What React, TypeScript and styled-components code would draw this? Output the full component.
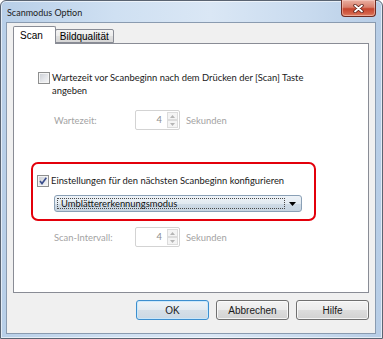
import React, { FC } from 'react';
import styled, { createGlobalStyle } from 'styled-components';

const GlobalStyle = createGlobalStyle`
  html, body {
    margin: 0;
    padding: 0;
    background: #ffffff;
  }
  body {
    width: 383px;
    height: 339px;
    overflow: hidden;
  }
`;

const uiFont = `Lato, 'Noto Sans', sans-serif`;
const classicFont = `'Liberation Sans', Arial, sans-serif`;

const Window = styled.div`
  box-sizing: border-box;
  width: 383px;
  height: 339px;
  display: flex;
  flex-direction: column;
  padding: 0 6px 4px 5px;
  border: 1px solid #5a6472;
  border-radius: 6px 6px 0 0;
  background: linear-gradient(
    to right,
    #b8cfe8 0%,
    #cfe0f2 30%,
    #dae7f5 55%,
    #c9dbef 80%,
    #b7cde6 100%
  );
  box-shadow: inset 0 0 0 1px rgba(255, 255, 255, 0.6);
`;

const TitleBar = styled.div`
  height: 21px;
  display: flex;
  align-items: flex-start;
`;

const Title = styled.span`
  font-family: ${uiFont};
  font-size: 9px;
  color: #1c1c1c;
  padding: 6px 0 0 1px;
`;

const CloseButton = styled.div`
  box-sizing: border-box;
  margin: -1px 0 0 auto;
  width: 35px;
  height: 17px;
  display: flex;
  align-items: center;
  justify-content: center;
  border: 1px solid #6e2b22;
  border-top: none;
  border-radius: 0 0 4px 4px;
  background: linear-gradient(
    #eab0a2 0%,
    #d9806d 45%,
    #c6452e 55%,
    #d4634a 85%,
    #e0866a 100%
  );
  box-shadow: inset 0 0 0 1px rgba(255, 220, 210, 0.45);
`;

const Client = styled.div`
  flex: 1;
  box-sizing: border-box;
  display: flex;
  flex-direction: column;
  padding: 3px 6px 0 6px;
  border: 1px solid #8a9bb0;
  background: #f0f0f0;
`;

const TabStrip = styled.div`
  display: flex;
  align-items: flex-end;
  height: 17px;
`;

const Tab = styled.div<{ $active?: boolean }>`
  box-sizing: border-box;
  position: relative;
  z-index: ${(p) => (p.$active ? 2 : 1)};
  height: ${(p) => (p.$active ? '18px' : '14px')};
  margin-bottom: ${(p) => (p.$active ? '-1px' : '0')};
  margin-left: ${(p) => (p.$active ? '0' : '-1px')};
  padding: ${(p) => (p.$active ? '3px 12px 0 6px' : '1px 4px 0 4px')};
  font-family: ${classicFont};
  font-size: 10px;
  color: #000;
  border: 1px solid #898c95;
  border-bottom: ${(p) => (p.$active ? 'none' : '1px solid #898c95')};
  border-radius: 2px 2px 0 0;
  background: ${(p) =>
    p.$active
      ? '#ffffff'
      : 'linear-gradient(#f4f4f4 0%, #ececec 50%, #e0e0e0 51%, #d6d6d6 100%)'};
`;

const Panel = styled.div`
  box-sizing: border-box;
  height: 250px;
  display: flex;
  flex-direction: column;
  align-items: flex-start;
  padding: 27px 0 0 17px;
  border: 1px solid #898c95;
  background: #ffffff;
  font-family: ${uiFont};
  font-size: 9.4px;
  color: #1a1a1a;
`;

const CheckRow = styled.div<{ $indent?: number }>`
  display: flex;
  align-items: flex-start;
  gap: 2px;
  margin-left: ${(p) => p.$indent ?? 0}px;
`;

const CheckBox = styled.div`
  box-sizing: border-box;
  flex: none;
  width: 12px;
  height: 12px;
  margin-top: 1px;
  border: 1px solid #8e8f8f;
  background: linear-gradient(135deg, #c8ccd2 0%, #e4e6ea 55%, #f7f7f7 100%);
  box-shadow: inset 0 0 0 1px #f4f4f4;
  display: flex;
  align-items: center;
  justify-content: center;
`;

const CheckLabel = styled.span`
  line-height: 13px;
`;

const SpinRow = styled.div<{ $top: number }>`
  display: flex;
  align-items: center;
  margin: ${(p) => p.$top}px 0 0 23px;
  color: #a3a3a3;
`;

const SpinLabel = styled.span`
  width: 81px;
`;

const SpinBox = styled.div`
  box-sizing: border-box;
  width: 45px;
  height: 20px;
  display: flex;
  border: 1px solid #d3d3d3;
  border-radius: 2px;
  background: #ffffff;
`;

const SpinValue = styled.span`
  flex: 1;
  text-align: right;
  padding: 3px 5px 0 0;
  color: #8c8c8c;
`;

const SpinButtons = styled.div`
  width: 11px;
  display: flex;
  flex-direction: column;
  padding: 1px 1px 1px 0;
  gap: 0;
`;

const SpinHalf = styled.div`
  flex: 1;
  display: flex;
  align-items: center;
  justify-content: center;
  border: 1px solid #dcdcdc;
  background: #f4f4f4;
`;

const Unit = styled.span`
  margin-left: 6px;
`;

const Highlight = styled.div`
  box-sizing: border-box;
  width: 285px;
  height: 59px;
  margin-top: 32px;
  padding: 10px 0 0 4px;
  border: 2px solid #e3000b;
  border-radius: 7px;
`;

const Dropdown = styled.div`
  box-sizing: border-box;
  width: 248px;
  height: 17px;
  margin: 8px 0 0 17px;
  display: flex;
  align-items: center;
  padding: 2px;
  border: 1px solid #8aa0b6;
  border-radius: 3px;
  background: linear-gradient(#eef3f8 0%, #e2eaf1 50%, #cfdbe6 51%, #c6d4e1 100%);
`;

const DropdownValue = styled.div`
  flex: 1;
  height: 100%;
  box-sizing: border-box;
  display: flex;
  align-items: center;
  padding-left: 3px;
  border: 1px dotted #4a4a4a;
  color: #111;
`;

const DropdownArrow = styled.div`
  width: 14px;
  display: flex;
  justify-content: center;
`;

const ButtonRow = styled.div`
  display: flex;
  justify-content: flex-end;
  gap: 7px;
  margin-top: 7px;
`;

const Button = styled.button<{ $default?: boolean }>`
  box-sizing: border-box;
  width: 73px;
  height: 20px;
  padding: 0;
  font-family: ${classicFont};
  font-size: 10px;
  color: #1a1a1a;
  border: 1px solid ${(p) => (p.$default ? '#3c8fcf' : '#707070')};
  border-radius: 3px;
  background: ${(p) =>
    p.$default
      ? 'linear-gradient(#eef4f8 0%, #e3ebf1 50%, #d4dfe8 51%, #cbd8e3 100%)'
      : 'linear-gradient(#f3f3f3 0%, #ebebeb 50%, #dddddd 51%, #d1d1d1 100%)'};
  box-shadow: inset 0 0 0 1px
    ${(p) => (p.$default ? 'rgba(200, 232, 252, 0.9)' : 'rgba(252, 252, 252, 0.8)')};
`;

const CloseGlyph: FC = () => (
  <svg width="11" height="9" viewBox="0 0 11 9">
    <path
      d="M2 1.5 L9 7.5 M9 1.5 L2 7.5"
      stroke="#5a1f17"
      strokeWidth="3.4"
      strokeLinecap="round"
    />
    <path
      d="M2 1.5 L9 7.5 M9 1.5 L2 7.5"
      stroke="#ffffff"
      strokeWidth="1.8"
      strokeLinecap="round"
    />
  </svg>
);

const CheckMark: FC = () => (
  <svg width="10" height="10" viewBox="0 0 10 10">
    <path
      d="M2 5 L4 7.6 L8.3 1.8"
      fill="none"
      stroke="#3b4e8c"
      strokeWidth="1.6"
    />
  </svg>
);

const SpinArrow: FC<{ down?: boolean }> = ({ down }) => (
  <svg width="5" height="3" viewBox="0 0 5 3">
    <path d={down ? 'M0 0 L5 0 L2.5 3 Z' : 'M0 3 L5 3 L2.5 0 Z'} fill="#b5b5b5" />
  </svg>
);

const Spinner: FC<{ label: string; value: number; top: number }> = ({
  label,
  value,
  top,
}) => (
  <SpinRow $top={top}>
    <SpinLabel>{label}</SpinLabel>
    <SpinBox>
      <SpinValue>{value}</SpinValue>
      <SpinButtons>
        <SpinHalf>
          <SpinArrow />
        </SpinHalf>
        <SpinHalf>
          <SpinArrow down />
        </SpinHalf>
      </SpinButtons>
    </SpinBox>
    <Unit>Sekunden</Unit>
  </SpinRow>
);

const App: FC = () => (
  <>
    <GlobalStyle />
    <Window>
      <TitleBar>
        <Title>Scanmodus Option</Title>
        <CloseButton>
          <CloseGlyph />
        </CloseButton>
      </TitleBar>
      <Client>
        <TabStrip>
          <Tab $active>Scan</Tab>
          <Tab>Bildqualität</Tab>
        </TabStrip>
        <Panel>
          <CheckRow $indent={7}>
            <CheckBox />
            <CheckLabel>
              Wartezeit vor Scanbeginn nach dem Drücken der [Scan] Taste
              <br />
              angeben
            </CheckLabel>
          </CheckRow>
          <Spinner label="Wartezeit:" value={4} top={13} />
          <Highlight>
            <CheckRow>
              <CheckBox>
                <CheckMark />
              </CheckBox>
              <CheckLabel>
                Einstellungen für den nächsten Scanbeginn konfigurieren
              </CheckLabel>
            </CheckRow>
            <Dropdown>
              <DropdownValue>Umblättererkennungsmodus</DropdownValue>
              <DropdownArrow>
                <svg width="7" height="4" viewBox="0 0 7 4">
                  <path d="M0 0 L7 0 L3.5 4 Z" fill="#000" />
                </svg>
              </DropdownArrow>
            </Dropdown>
          </Highlight>
          <Spinner label="Scan-Intervall:" value={4} top={6} />
        </Panel>
        <ButtonRow>
          <Button $default>OK</Button>
          <Button>Abbrechen</Button>
          <Button>Hilfe</Button>
        </ButtonRow>
      </Client>
    </Window>
  </>
);

export default App;
